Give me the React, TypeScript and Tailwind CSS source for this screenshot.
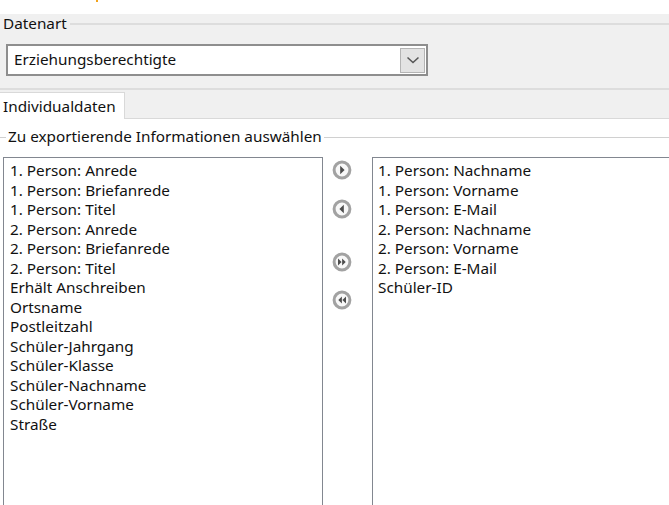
import React from "react";

const available = [
  "1. Person: Anrede",
  "1. Person: Briefanrede",
  "1. Person: Titel",
  "2. Person: Anrede",
  "2. Person: Briefanrede",
  "2. Person: Titel",
  "Erhält Anschreiben",
  "Ortsname",
  "Postleitzahl",
  "Schüler-Jahrgang",
  "Schüler-Klasse",
  "Schüler-Nachname",
  "Schüler-Vorname",
  "Straße",
];

const selected = [
  "1. Person: Nachname",
  "1. Person: Vorname",
  "1. Person: E-Mail",
  "2. Person: Nachname",
  "2. Person: Vorname",
  "2. Person: E-Mail",
  "Schüler-ID",
];

type Dir = "right" | "left" | "allRight" | "allLeft";

function MoveIcon({ dir }: { dir: Dir }) {
  let shapes: React.ReactNode;
  if (dir === "right") shapes = <polygon points="8.2,5.8 12.6,10 8.2,14.2" />;
  else if (dir === "left") shapes = <polygon points="11.8,5.8 7.4,10 11.8,14.2" />;
  else if (dir === "allRight")
    shapes = (
      <>
        <polygon points="6,6.6 9.6,10 6,13.4" />
        <polygon points="10.1,6.6 13.7,10 10.1,13.4" />
      </>
    );
  else
    shapes = (
      <>
        <polygon points="14,6.6 10.4,10 14,13.4" />
        <polygon points="9.9,6.6 6.3,10 9.9,13.4" />
      </>
    );
  return (
    <svg width="20" height="20" viewBox="0 0 20 20" className="block">
      <circle cx="10" cy="10" r="7.9" fill="#f8f8f8" stroke="#a2a2a2" strokeWidth="3" />
      <g fill="#4d4d4d">{shapes}</g>
    </svg>
  );
}

function ListBox({ items, className }: { items: string[]; className: string }) {
  return (
    <div className={`h-[360px] border border-[#828790] bg-white pt-[3px] leading-[19.5px] ${className}`}>
      {items.map((t) => (
        <div key={t} className="whitespace-nowrap">
          {t}
        </div>
      ))}
    </div>
  );
}

export default function App() {
  return (
    <div className="w-[669px] h-[505px] overflow-hidden bg-[#f0f0f0] font-['Noto_Sans',sans-serif] text-[15.3px] text-[#111111] flex flex-col">
      <div className="h-[14px] shrink-0 bg-white relative">
        <div className="absolute left-[96px] top-0 w-[2px] h-[2px] bg-[#f2a31b]" />
      </div>

      {/* Datenart group */}
      <div className="h-[20px] shrink-0 flex items-center">
        <span className="pl-[3px] pr-[3px] leading-none">Datenart</span>
        <div className="flex-1 h-[2px] bg-[#dddddd]" />
      </div>
      <div className="mt-[10px] ml-[6px] w-[422px] h-[32px] shrink-0 border-2 border-[#8e8e8e] bg-white flex items-center">
        <span className="pl-[6px] leading-none">Erziehungsberechtigte</span>
        <div className="ml-auto mr-[1px] w-[25px] h-[25px] bg-[#e3e3e3] border border-[#b4b4b4] flex items-center justify-center">
          <svg width="14" height="8" viewBox="0 0 14 8">
            <path d="M1.5 1.5 L7 6.5 L12.5 1.5" fill="none" stroke="#555" strokeWidth="1.5" />
          </svg>
        </div>
      </div>
      <div className="mt-[12px] h-[2px] shrink-0 bg-[#dddddd]" />

      {/* Tab strip */}
      <div className="mt-[2px] h-[27px] shrink-0 flex">
        <div className="w-[125px] bg-white border-t border-r border-[#d9d9d9] flex items-center pl-[3px]">
          Individualdaten
        </div>
        <div className="flex-1 border-b border-[#d9d9d9]" />
      </div>

      {/* Tab page */}
      <div className="flex-1 bg-white flex flex-col">
        <div className="mt-[8px] h-[20px] shrink-0 flex items-center">
          <div className="w-[6px] h-[1px] bg-[#d0d0d0]" />
          <span className="px-[2px] leading-none">Zu exportierende Informationen auswählen</span>
          <div className="flex-1 h-[1px] bg-[#d0d0d0]" />
        </div>
        <div className="mt-[10px] flex">
          <ListBox items={available} className="ml-[3px] w-[320px] shrink-0 pl-[6px]" />
          <div className="w-[49px] shrink-0 flex flex-col pt-[3px] pl-[9px]">
            <MoveIcon dir="right" />
            <div className="mt-[19px]">
              <MoveIcon dir="left" />
            </div>
            <div className="mt-[33px]">
              <MoveIcon dir="allRight" />
            </div>
            <div className="mt-[18px]">
              <MoveIcon dir="allLeft" />
            </div>
          </div>
          <ListBox items={selected} className="w-[320px] shrink-0 pl-[5px]" />
        </div>
      </div>
    </div>
  );
}
